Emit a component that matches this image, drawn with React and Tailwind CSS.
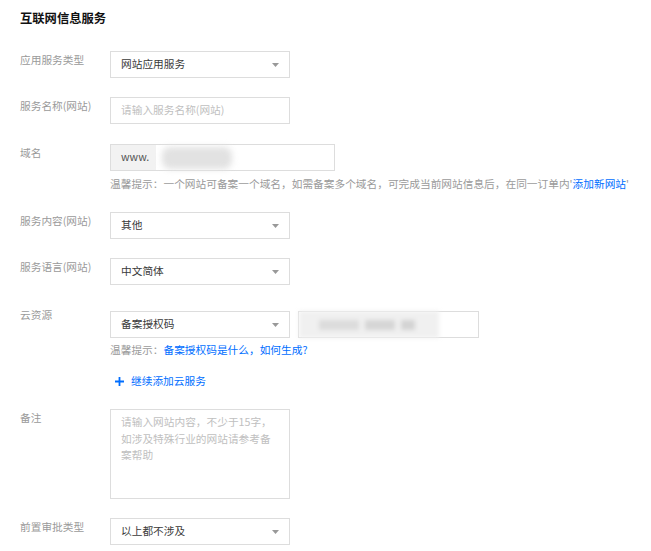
import { useState } from "react";

const font = { fontFamily: '"Noto Sans CJK SC", "Noto Sans", sans-serif' };

const Arrow = () => (
  <svg width="7" height="4" viewBox="0 0 7 4" className="shrink-0">
    <path d="M0 0 L7 0 L3.5 4 Z" fill="#999" />
  </svg>
);

const Select = ({ value }) => (
  <div className="w-[180px] h-[27px] border border-[#dddddd] bg-white flex items-center justify-between pl-[10px] pr-[10px] text-[#3a3a3a]">
    <span>{value}</span>
    <Arrow />
  </div>
);

const Label = ({ children, className = "" }) => (
  <div className={`w-[90px] shrink-0 leading-[18px] text-[#9a9a9a] ${className}`}>{children}</div>
);

const App = () => {
  const [note] = useState("");

  return (
    <div className="min-h-screen bg-white px-[20px] pt-[8px] text-[10.7px]" style={font}>
      {/* TITLE */}
      <h1 className="text-[12.3px] leading-[20px] font-bold text-[#111]">互联网信息服务</h1>

      {/* 应用服务类型 */}
      <div className="flex items-start mt-[23px]">
        <Label>应用服务类型</Label>
        <Select value="网站应用服务" />
      </div>

      {/* 服务名称 */}
      <div className="flex items-start mt-[19px]">
        <Label>服务名称(网站)</Label>
        <div className="w-[180px] h-[27px] border border-[#dddddd] flex items-center pl-[10px] text-[#c0c0c0]">
          请输入服务名称(网站)
        </div>
      </div>

      {/* 域名 */}
      <div className="flex items-start mt-[20px]">
        <Label>域名</Label>
        <div>
          <div className="w-[225px] h-[27px] border border-[#dddddd] flex items-stretch">
            <div className="w-[45px] bg-[#f2f2f2] flex items-center pl-[10px] text-[#555]">www.</div>
            <div className="flex items-center pl-[6px]">
              <div className="w-[70px] h-[22px] bg-[#e2e2e2] rounded-[8px] blur-[3px]" />
            </div>
          </div>
          <p className="mt-[4px] leading-[18px] text-[#9a9a9a] whitespace-nowrap">
            温馨提示：一个网站可备案一个域名，如需备案多个域名，可完成当前网站信息后，在同一订单内
            <span>'</span>
            <span className="text-[#006eff]">添加新网站</span>
            <span>'</span>
          </p>
        </div>
      </div>

      {/* 服务内容 */}
      <div className="flex items-start mt-[19px]">
        <Label>服务内容(网站)</Label>
        <Select value="其他" />
      </div>

      {/* 服务语言 */}
      <div className="flex items-start mt-[19px]">
        <Label>服务语言(网站)</Label>
        <Select value="中文简体" />
      </div>

      {/* 云资源 */}
      <div className="flex items-start mt-[26px]">
        <Label className="-mt-[5px]">云资源</Label>
        <div>
          <div className="flex items-start gap-[8px]">
            <Select value="备案授权码" />
            <div className="w-[181px] h-[27px] border border-[#dddddd] flex items-center">
              <div className="w-[140px] h-[27px] bg-[#f0f0f0] blur-[2px] flex items-center gap-[6px] pl-[20px]">
                <div className="w-[40px] h-[10px] bg-[#dcdcdc]" />
                <div className="w-[30px] h-[10px] bg-[#d6d6d6]" />
                <div className="w-[14px] h-[10px] bg-[#d4d4d4]" />
              </div>
            </div>
          </div>
          <p className="mt-[3px] leading-[18px] whitespace-nowrap">
            <span className="text-[#9a9a9a]">温馨提示：</span>
            <span className="text-[#006eff]">备案授权码是什么，如何生成?</span>
          </p>
          <div className="mt-[13px] leading-[18px] flex items-center text-[#006eff]">
            <svg width="9" height="9" viewBox="0 0 9 9" className="ml-[5px] mr-[7px]">
              <path d="M4.5 0 V9 M0 4.5 H9" stroke="#006eff" strokeWidth="1.8" />
            </svg>
            <span>继续添加云服务</span>
          </div>
        </div>
      </div>

      {/* 备注 */}
      <div className="flex items-start mt-[19px]">
        <Label>备注</Label>
        <textarea
          value={note}
          readOnly
          placeholder="请输入网站内容，不少于15字，如涉及特殊行业的网站请参考备案帮助"
          className="w-[180px] h-[90px] border border-[#dddddd] resize-none px-[10px] py-[4px] leading-[16.5px] text-[10.7px] placeholder:text-[#c0c0c0] outline-none"
          style={font}
        />
      </div>

      {/* 前置审批类型 */}
      <div className="flex items-start mt-[19px]">
        <Label>前置审批类型</Label>
        <Select value="以上都不涉及" />
      </div>
    </div>
  );
};

export default App;
